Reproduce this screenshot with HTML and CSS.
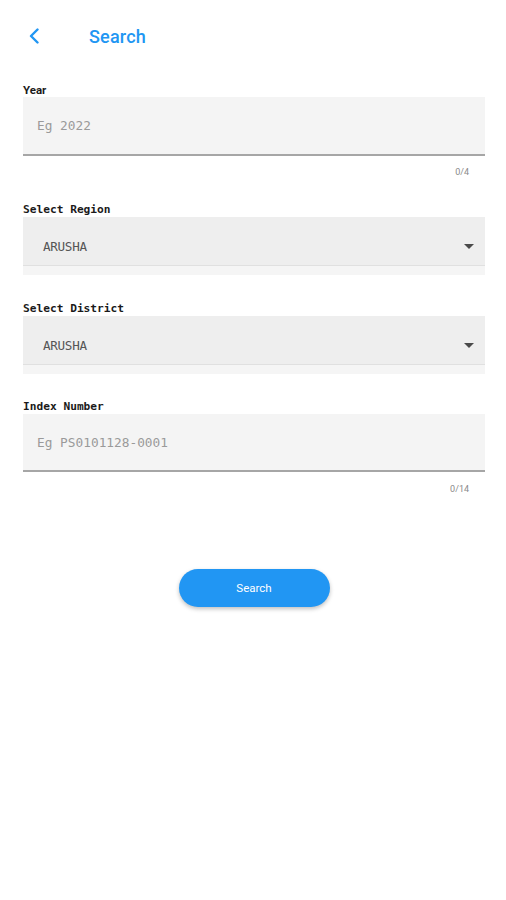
FILE: index.html
```html
<!DOCTYPE html>
<html lang="en">
<head>
<meta charset="utf-8">
<title>Search</title>
<link rel="stylesheet" href="styles.css">
</head>
<body>
<div class="screen">
  <header class="appbar">
    <svg class="back" width="12" height="16" viewBox="0 0 12 16" aria-hidden="true">
      <polyline points="9.5,1.5 3,8 9.5,14.5" fill="none" stroke="#2196f3" stroke-width="2.4" stroke-linecap="round" stroke-linejoin="round"/>
    </svg>
    <h1 class="title">Search</h1>
  </header>

  <main class="form">
    <div class="group group-year">
      <div class="label label-sans">Year</div>
      <div class="field"><span class="placeholder">Eg 2022</span></div>
      <div class="counter">0/4</div>
    </div>

    <div class="group group-region">
      <div class="label">Select Region</div>
      <div class="select-wrap">
        <div class="select"><span class="value">ARUSHA</span><span class="arrow"></span></div>
      </div>
    </div>

    <div class="group group-district">
      <div class="label">Select District</div>
      <div class="select-wrap">
        <div class="select"><span class="value">ARUSHA</span><span class="arrow"></span></div>
      </div>
    </div>

    <div class="group group-index">
      <div class="label">Index Number</div>
      <div class="field"><span class="placeholder">Eg PS0101128-0001</span></div>
      <div class="counter">0/14</div>
    </div>

    <div class="actions">
      <button class="btn">Search</button>
    </div>
  </main>
</div>
</body>
</html>
```

FILE: styles.css
```css
* { box-sizing: border-box; }

html, body {
  margin: 0;
  padding: 0;
  background: #ffffff;
}

body {
  font-family: Roboto, "Liberation Sans", sans-serif;
  color: #222;
}

.screen {
  width: 506px;
  min-height: 900px;
  background: #fff;
}

.appbar {
  height: 72px;
  display: flex;
  align-items: center;
  padding-left: 28px;
}

.back {
  display: block;
  margin-top: -1px;
}

.title {
  margin: 0 0 0 49px;
  font-size: 18px;
  font-weight: 500;
  color: #2196f3;
  letter-spacing: 0.2px;
}

.form {
  padding: 0 21px 0 23px;
}

.label {
  font-family: "DejaVu Sans Mono", "Liberation Mono", monospace;
  font-weight: bold;
  font-size: 11.2px;
  line-height: 14px;
  color: #1a1a1a;
}

.label-sans {
  font-family: Roboto, "Liberation Sans", sans-serif;
  font-size: 11.5px;
  font-weight: 700;
}

.group-year { margin-top: 11px; }
.group-region { margin-top: 25px; }
.group-district { margin-top: 27px; }
.group-index { margin-top: 26px; }

.field {
  height: 59px;
  background: #f4f4f4;
  border-bottom: 2px solid #a6a6a6;
  display: flex;
  align-items: center;
  padding-left: 14px;
}

.group-index .field { height: 58px; }

.placeholder {
  font-family: "DejaVu Sans Mono", "Liberation Mono", monospace;
  font-size: 12.8px;
  color: #9a9a9a;
}

.counter {
  margin-top: 10px;
  line-height: 12px;
  font-size: 9px;
  color: #8a8a8a;
  text-align: right;
  padding-right: 16px;
}

.group-index .counter { margin-top: 11px; }

.select-wrap {
  background: #f5f5f5;
  padding-bottom: 9px;
}

.select {
  height: 49px;
  background: #eeeeee;
  border-bottom: 1px solid #e0e0e0;
  display: flex;
  align-items: center;
  padding: 10px 11px 0 20px;
}

.value {
  flex: 1;
  font-family: "DejaVu Sans Mono", "Liberation Mono", monospace;
  font-size: 12.6px;
  color: #555;
  letter-spacing: -0.3px;
}

.arrow {
  width: 0;
  height: 0;
  border-left: 5px solid transparent;
  border-right: 5px solid transparent;
  border-top: 5px solid #4a4a4a;
}

.actions {
  display: flex;
  justify-content: center;
  margin-top: 74px;
}

.btn {
  width: 151px;
  height: 38px;
  border: none;
  border-radius: 19px;
  background: #2196f3;
  color: #ffffff;
  font-family: Roboto, "Liberation Sans", sans-serif;
  font-size: 11.5px;
  font-weight: 400;
  box-shadow: 0 2px 4px rgba(0, 0, 0, 0.25);
  cursor: pointer;
}
```
